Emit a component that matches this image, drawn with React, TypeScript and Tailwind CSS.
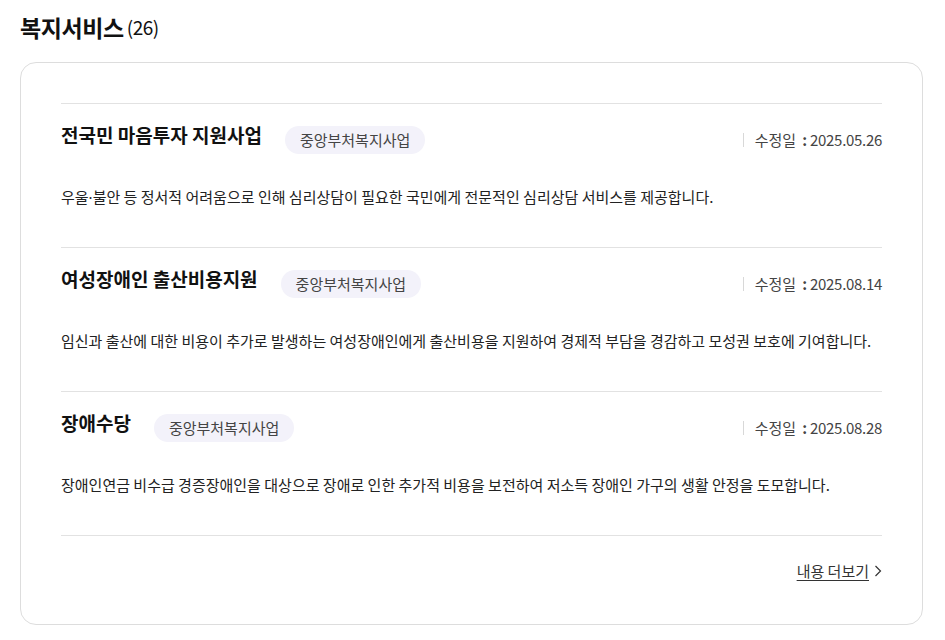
const services = [
  {
    title: '전국민 마음투자 지원사업',
    tag: '중앙부처복지사업',
    date: '2025.05.26',
    desc: '우울·불안 등 정서적 어려움으로 인해 심리상담이 필요한 국민에게 전문적인 심리상담 서비스를 제공합니다.',
  },
  {
    title: '여성장애인 출산비용지원',
    tag: '중앙부처복지사업',
    date: '2025.08.14',
    desc: '임신과 출산에 대한 비용이 추가로 발생하는 여성장애인에게 출산비용을 지원하여 경제적 부담을 경감하고 모성권 보호에 기여합니다.',
  },
  {
    title: '장애수당',
    tag: '중앙부처복지사업',
    date: '2025.08.28',
    desc: '장애인연금 비수급 경증장애인을 대상으로 장애로 인한 추가적 비용을 보전하여 저소득 장애인 가구의 생활 안정을 도모합니다.',
  },
];

// the CJK font draws "·" full-width; set it in a latin face so it sits tight
function Desc({ text }: { text: string }): React.JSX.Element {
  const parts = text.split('·');
  return (
    <>
      {parts.map((p, i) => (
        <span key={i}>
          {i > 0 && <span style={{ fontFamily: '"Noto Sans", sans-serif' }}>·</span>}
          {p}
        </span>
      ))}
    </>
  );
}

function ServiceItem({ title, tag, date, desc }: (typeof services)[number]): React.JSX.Element {
  return (
    <li className="border-t border-[#e2e2e2] pb-[39px] pt-[17px]">
      <div className="flex items-start">
        <h3 className="text-[19px] font-bold leading-[28px] text-[#111]">{title}</h3>
        <span className="ml-[23px] mt-[5px] flex h-[28px] items-center rounded-full bg-[#f3f2fa] px-[15px] text-[15px] text-[#444]">
          {tag}
        </span>
        <div className="ml-auto mt-[5px] flex h-[28px] items-center text-[15px] text-[#444]">
          <span className="mr-[11px] h-[14px] w-px bg-[#d8d8d8]" />
          <span>수정일</span>
          <span className="ml-[6px] mr-[3px] font-bold">:</span>
          <span className="tracking-[-0.3px]">{date}</span>
        </div>
      </div>
      <p className="mt-[32px] text-[15px] leading-[22px] text-[#222]">
        <Desc text={desc} />
      </p>
    </li>
  );
}

export default function App(): React.JSX.Element {
  return (
    <div
      className="min-h-screen w-[945px] bg-white pl-5 pr-[22px] pt-[12px]"
      style={{ fontFamily: '"Noto Sans CJK KR", "Noto Sans", sans-serif' }}
    >
      <h2 className="flex h-[30px] items-center text-[#111]">
        <span className="text-[23px] font-semibold tracking-[-0.4px]">복지서비스</span>
        <span className="ml-[3px] text-[19px] tracking-[-0.5px]">(26)</span>
      </h2>
      <section className="mt-[20px] rounded-[16px] border border-[#dddddd] px-[40px] pb-[43px] pt-[40px]">
        <ul>
          {services.map((s) => (
            <ServiceItem key={s.title} {...s} />
          ))}
        </ul>
        <div className="flex justify-end border-t border-[#e2e2e2] pt-[25px]">
          <a href="#" className="flex items-center text-[15px] leading-[20px] text-[#333]">
            <span className="underline underline-offset-[3px]">내용 더보기</span>
            <svg className="ml-[5px]" width="8" height="12" viewBox="0 0 8 12" fill="none">
              <path d="M1.5 1 L6.5 6 L1.5 11" stroke="#333" strokeWidth="1.2" />
            </svg>
          </a>
        </div>
      </section>
    </div>
  );
}
